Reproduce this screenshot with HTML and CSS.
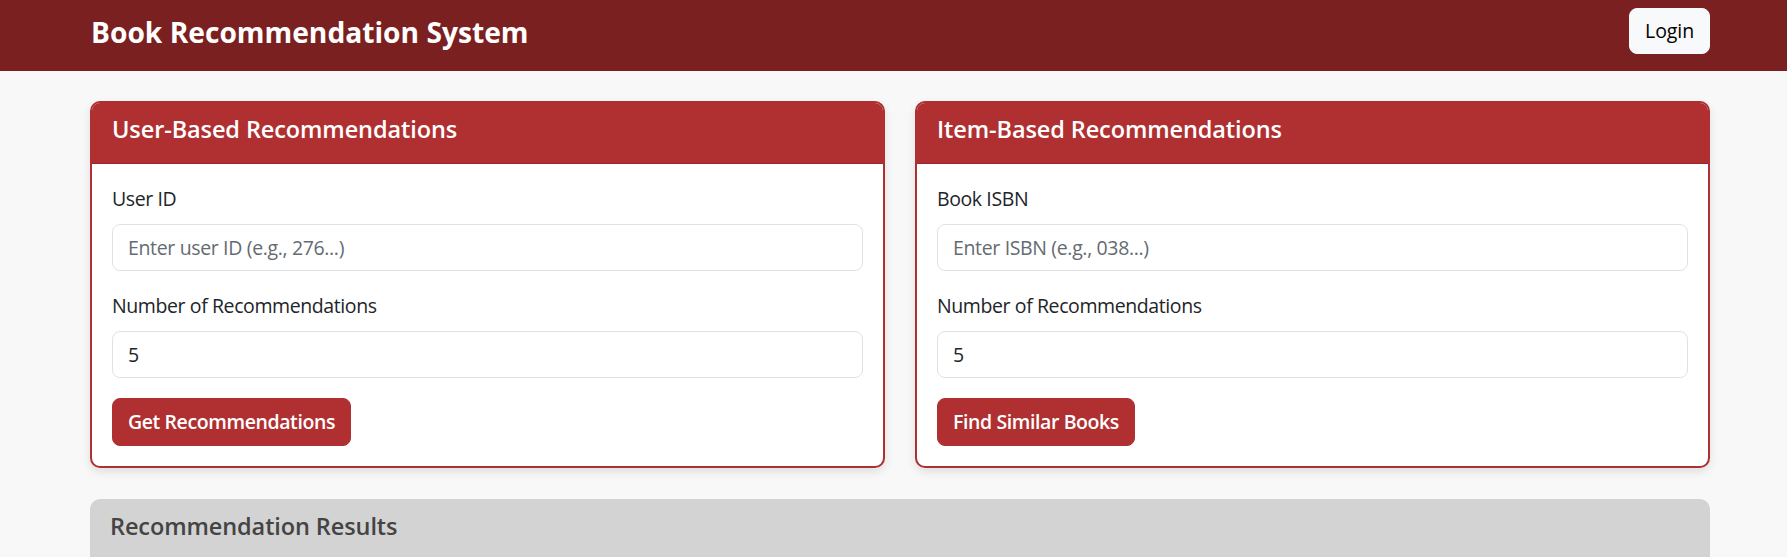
FILE: index.html
```html
<!DOCTYPE html>
<html lang="en">
<head>
<meta charset="utf-8">
<title>Book Recommendation System</title>
<link rel="stylesheet" href="styles.css">
</head>
<body>
<nav class="navbar">
  <div class="nav-inner">
    <span class="brand">Book Recommendation System</span>
    <button class="btn btn-login" type="button">Login</button>
  </div>
</nav>
<main class="container">
  <div class="row">
    <section class="card">
      <div class="card-header"><h4 class="card-title">User-Based Recommendations</h4></div>
      <div class="card-body">
        <div class="field">
          <label class="label" for="uid">User ID</label>
          <input class="input" id="uid" type="text" placeholder="Enter user ID (e.g., 276...)">
        </div>
        <div class="field">
          <label class="label" for="un">Number of Recommendations</label>
          <input class="input" id="un" type="text" value="5">
        </div>
        <button class="btn btn-red" type="button">Get Recommendations</button>
      </div>
    </section>
    <section class="card">
      <div class="card-header"><h4 class="card-title">Item-Based Recommendations</h4></div>
      <div class="card-body">
        <div class="field">
          <label class="label" for="isbn">Book ISBN</label>
          <input class="input" id="isbn" type="text" placeholder="Enter ISBN (e.g., 038...)">
        </div>
        <div class="field">
          <label class="label" for="in">Number of Recommendations</label>
          <input class="input" id="in" type="text" value="5">
        </div>
        <button class="btn btn-red" type="button">Find Similar Books</button>
      </div>
    </section>
  </div>
  <section class="results">
    <div class="results-header"><h4 class="results-title">Recommendation Results</h4></div>
    <div class="results-body"></div>
  </section>
</main>
</body>
</html>
```
FILE: styles.css
```css
* { box-sizing: border-box; }
html, body { margin: 0; padding: 0; }
body {
  background: #f8f8f8;
  font-family: "Open Sans", "Noto Sans", sans-serif;
  font-size: 19.5px;
  line-height: 30px;
  letter-spacing: -0.4px;
  color: #212529;
  overflow: hidden;
}
.navbar {
  background: #7b2021;
  height: 71px;
  padding-top: 8px;
}
.nav-inner {
  width: 1620px;
  margin-left: 90px;
  height: 46px;
  display: flex;
  align-items: center;
  justify-content: space-between;
}
.brand {
  color: #fff;
  font-weight: 700;
  font-size: 28.2px;
  line-height: 1.2;
  letter-spacing: 0;
  padding-left: 1px;
  padding-top: 3px;
}
.btn {
  font-family: inherit;
  font-size: 19.5px;
  line-height: 30px;
  letter-spacing: -0.4px;
  padding: 0 15px;
  border-radius: 8px;
  border: 1px solid transparent;
  cursor: pointer;
}
.btn-login {
  background: #f8f9fa;
  color: #000;
  border-color: #f8f9fa;
  height: 46px;
  letter-spacing: -0.1px;
}
.container {
  width: 1620px;
  margin: 30px 0 0 90px;
}
.row {
  display: grid;
  grid-template-columns: 1fr 1fr;
  gap: 30px;
}
.card {
  background: #fff;
  border: 2px solid #b03032;
  border-radius: 10px;
  overflow: hidden;
  box-shadow: 0 4px 10px rgba(0, 0, 0, 0.1);
}
.card-header {
  background: #b03032;
  padding: 11px 20px 0;
  border-bottom: 1px solid #94282a;
}
.card-title {
  margin: 0 0 19px;
  color: #fff;
  font-size: 23.5px;
  font-weight: 600;
  line-height: 30px;
  letter-spacing: -0.1px;
}
.card-body {
  padding: 20px;
}
.field {
  display: flex;
  flex-direction: column;
  margin-bottom: 20px;
}
.label {
  margin-bottom: 10px;
  color: #212529;
}
.input {
  font-family: inherit;
  font-size: 19.5px;
  line-height: 30px;
  letter-spacing: -0.35px;
  height: 47px;
  padding: 7px 15px;
  border: 1px solid #dee2e6;
  border-radius: 8px;
  color: #212529;
  background: #fff;
  width: 100%;
}
.input::placeholder { color: #646b72; }
.btn-red {
  background: #b03032;
  border-color: #b03032;
  color: #fff;
  font-weight: 600;
  height: 48px;
}
.results {
  margin-top: 31px;
  background: #fff;
  border-radius: 10px;
  overflow: hidden;
}
.results-header {
  background: #d3d3d3;
  padding: 12px 20px 10px;
}
.results-title {
  margin: 0 0 10px;
  font-size: 23.5px;
  font-weight: 600;
  line-height: 30px;
  letter-spacing: -0.1px;
  color: #444;
}
.results-body { height: 100px; }
```
